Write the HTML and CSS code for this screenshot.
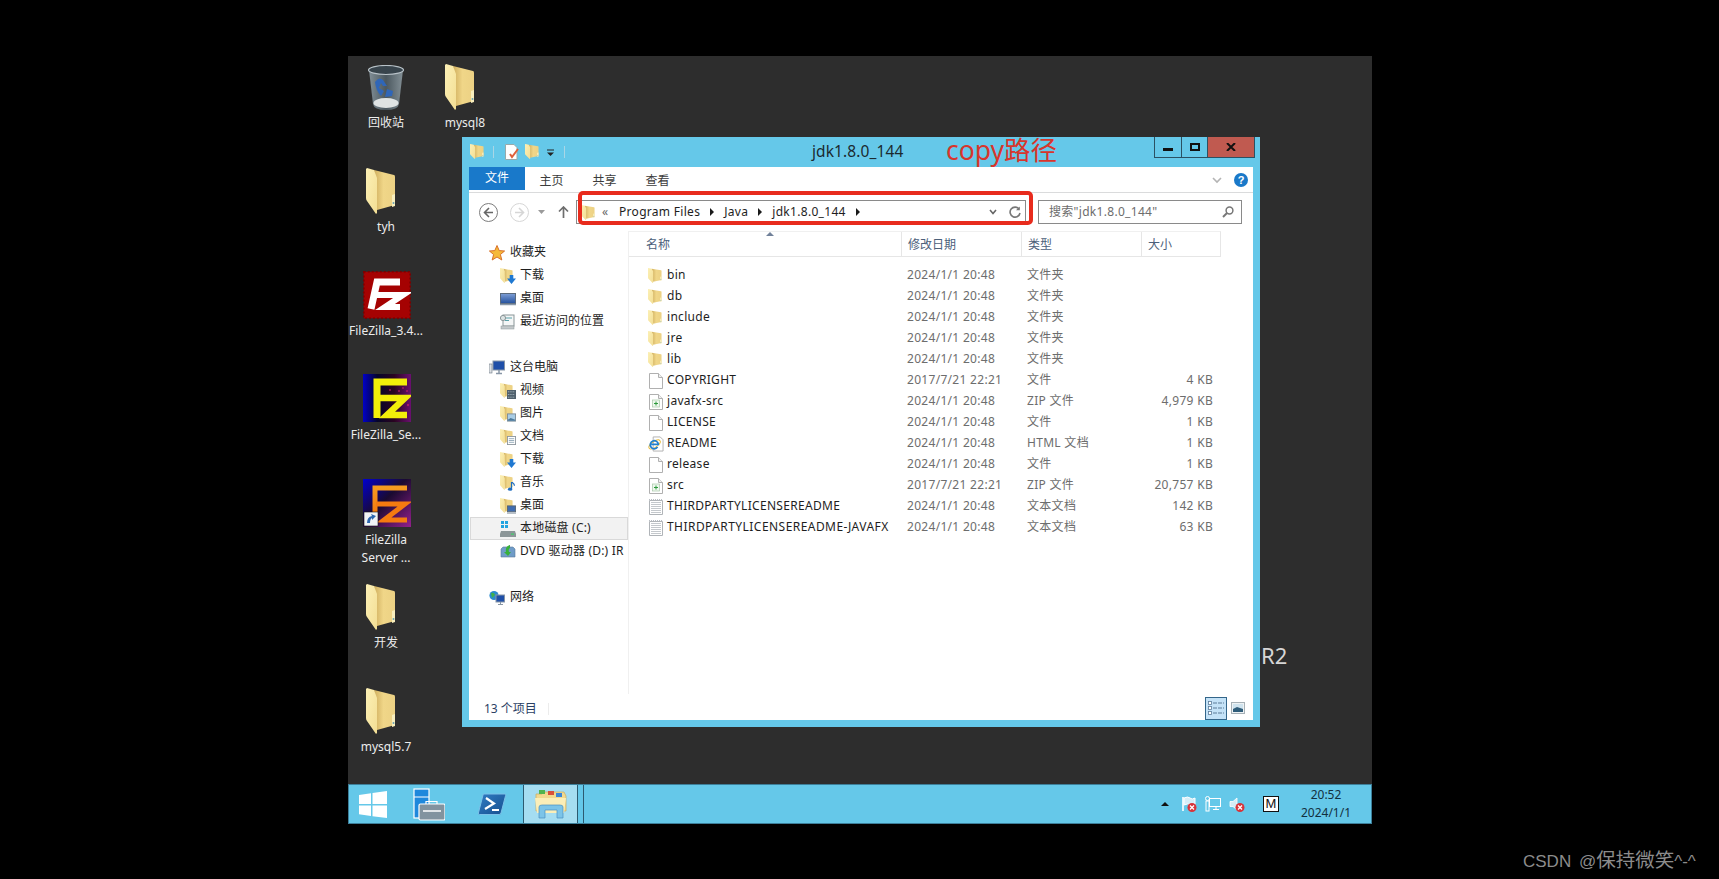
FILE: index.html
```html
<!DOCTYPE html>
<html lang="zh">
<head>
<meta charset="utf-8">
<title>jdk1.8.0_144</title>
<link rel="stylesheet" href="styles.css">
</head>
<body>
<svg class="defs" width="0" height="0">
  <defs>
    <linearGradient id="gLeaf" x1="0" y1="0" x2="1" y2="1"><stop offset="0" stop-color="#fcf0b6"/><stop offset="1" stop-color="#f3de94"/></linearGradient>
    <linearGradient id="gBack" x1="0" y1="0" x2="1" y2="0"><stop offset="0" stop-color="#cfae5e"/><stop offset=".45" stop-color="#f0d688"/><stop offset="1" stop-color="#ecd184"/></linearGradient>
    <linearGradient id="gBin" x1="0" y1="0" x2="1" y2="0"><stop offset="0" stop-color="#8a99a2"/><stop offset=".5" stop-color="#4e5c64"/><stop offset="1" stop-color="#8d9ba2"/></linearGradient>
    <linearGradient id="gFz2" x1="0" y1="0" x2="1" y2="0"><stop offset="0" stop-color="#0000c8"/><stop offset=".3" stop-color="#05052a"/><stop offset=".65" stop-color="#2a0420"/><stop offset="1" stop-color="#6a1070"/></linearGradient>
    <linearGradient id="gFz3" x1="0" y1="0" x2="1" y2="1"><stop offset="0" stop-color="#0000d0"/><stop offset=".45" stop-color="#1a0a30"/><stop offset="1" stop-color="#93208c"/></linearGradient>
    <linearGradient id="gOr" x1="0" y1="0" x2="0" y2="1"><stop offset="0" stop-color="#f59a20"/><stop offset="1" stop-color="#f26a08"/></linearGradient>
    <linearGradient id="gMon" x1="0" y1="0" x2="0" y2="1"><stop offset="0" stop-color="#7f9fd6"/><stop offset="1" stop-color="#23509c"/></linearGradient>
    <linearGradient id="gPs" x1="0" y1="0" x2="1" y2="1"><stop offset="0" stop-color="#2f7cc4"/><stop offset="1" stop-color="#174f8e"/></linearGradient>
    <symbol id="folder" viewBox="0 0 30 46" preserveAspectRatio="none">
      <path d="M8 2 L28 7 Q29 7 29 9 L29 37 L11 42 Z" fill="url(#gBack)"/>
      <path d="M1 0 L8 2 L11 10 L11 45 L10 46 L1 33 Q0 32 0 30 L0 1 Z" fill="url(#gLeaf)"/>
      <path d="M26 27 L29 26 L29 38 L26 39 Z" fill="#f8eebd"/>
      <circle cx="27.5" cy="35" r="1" fill="#6aa2b0"/>
    </symbol>
    <symbol id="file" viewBox="0 0 16 16">
      <path d="M1.5 .5 H10.5 L14.5 4.5 V15.5 H1.5 Z" fill="#fff" stroke="#b0b0b0"/>
      <path d="M10.5 .5 V4.5 H14.5" fill="#f0f0f0" stroke="#b0b0b0"/>
    </symbol>
    <symbol id="zip" viewBox="0 0 16 16">
      <use href="#file"/>
      <rect x="4.5" y="6" width="7" height="7" fill="#eef7ee" stroke="#a8c8a8" stroke-width=".7"/>
      <path d="M8 7.5 V11.5 M6 9.5 H10" stroke="#2d9a3c"/>
    </symbol>
    <symbol id="txt" viewBox="0 0 16 16">
      <path d="M1.5 1.5 H14.5 V15.5 H1.5 Z" fill="#fff" stroke="#b0b4b8"/>
      <path d="M1 .5 H15" stroke="#b9bec4" stroke-dasharray="1 1"/>
      <path d="M3 3.5 H13 M3 5.5 H13 M3 7.5 H13 M3 9.5 H13 M3 11.5 H13 M3 13.5 H13" stroke="#c4c8cc"/>
    </symbol>
    <symbol id="ie" viewBox="0 0 17 16">
      <path d="M5.5 .5 H13 L16 3.5 V15.5 H5.5 Z" fill="#fff" stroke="#b0b0b0"/>
      <ellipse cx="7" cy="8.5" rx="7" ry="3" fill="none" stroke="#e8b830" transform="rotate(-35 7 8.5)"/>
      <path d="M3.5 8.5 H11 A4.3 4.3 0 1 0 10.2 11.3" fill="none" stroke="#1e7fd0" stroke-width="1.8"/>
    </symbol>
  </defs>
</svg>

<main class="desktop">
  <div class="icon at-bin">
    <svg class="ico-bin" viewBox="0 0 36 46">
      <path d="M1 5 L5 39 Q6 45 18 45 Q30 45 31 39 L35 5 Z" fill="url(#gBin)" opacity=".9"/>
      <ellipse cx="18" cy="5" rx="17.5" ry="4.5" fill="#38444c" stroke="#b8c2c8" stroke-width="1.2"/>
      <ellipse cx="18" cy="38" rx="12.5" ry="5" fill="#dfe3e3"/>
      <path d="M7 17 Q11 11 15 15 L19 21 L15 21 L13 18 L11 23 L16 26 L13 31 Q8 26 7 17 Z M19 24 L25 26 L24 31 L17 32 Z" fill="#2f66b8"/>
    </svg>
    <span class="lbl">回收站</span>
  </div>
  <div class="icon at-mysql8"><svg class="ico-folder"><use href="#folder"/></svg><span class="lbl">mysql8</span></div>
  <div class="icon at-tyh"><svg class="ico-folder"><use href="#folder"/></svg><span class="lbl">tyh</span></div>
  <div class="icon at-fz1">
    <svg class="ico-fz" viewBox="0 0 48 48">
      <rect x=".8" y=".8" width="46.4" height="46.4" fill="#a50202" stroke="#7a0000" stroke-width="1.6" stroke-dasharray="2 2"/>
      <polyline points="37,11 14,11 8,38" fill="none" stroke="#fff" stroke-width="7"/>
      <polyline points="14,24 40,24 22,36 37,36" fill="none" stroke="#fff" stroke-width="6"/>
    </svg>
    <span class="lbl">FileZilla_3.4...</span>
  </div>
  <div class="icon at-fz2">
    <svg class="ico-fz" viewBox="0 0 48 48">
      <rect width="48" height="48" fill="url(#gFz2)"/>
      <g fill="#c8206a" opacity=".7"><circle cx="40" cy="14" r="1"/><circle cx="44" cy="17" r="1"/><circle cx="30" cy="32" r="1"/><circle cx="45" cy="31" r="1.2"/><circle cx="27" cy="16" r="1"/><circle cx="36" cy="17" r="1"/></g>
      <polyline points="44,8 14,8 14,44" fill="none" stroke="#f2ee0a" stroke-width="7"/>
      <polyline points="16,24 42,24 24,41 44,41" fill="none" stroke="#f2ee0a" stroke-width="6.5"/>
    </svg>
    <span class="lbl">FileZilla_Se...</span>
  </div>
  <div class="icon at-fz3">
    <svg class="ico-fz" viewBox="0 0 48 48">
      <rect width="48" height="48" fill="url(#gFz3)"/>
      <polyline points="44,9 12,9 12,46" fill="none" stroke="url(#gOr)" stroke-width="5"/>
      <polyline points="13,25 42,25 21,41 44,41" fill="none" stroke="#f57a10" stroke-width="5"/>
      <rect x="1" y="33" width="14" height="14" fill="#f1f3f5" stroke="#111" stroke-width=".6"/>
      <path d="M4 44 Q4 38 9 37 L8 35 L13 37 L9 41 L9 39 Q7 40 7 44 Z" fill="#2d66ae"/>
    </svg>
    <span class="lbl">FileZilla<br>Server ...</span>
  </div>
  <div class="icon at-dev"><svg class="ico-folder"><use href="#folder"/></svg><span class="lbl">开发</span></div>
  <div class="icon at-mysql57"><svg class="ico-folder"><use href="#folder"/></svg><span class="lbl">mysql5.7</span></div>

  <span class="edition">R2</span>

  <section class="window">
    <header class="titlebar">
      <svg class="qa-folder"><use href="#folder"/></svg>
      <i class="qa-sep"></i>
      <svg class="qa-doc" viewBox="0 0 15 16">
        <path d="M1.5 .5 H10 L13 3.5 V15.5 H1.5 Z" fill="#fff" stroke="#9aa"/>
        <path d="M6 10 L8 13 L14 5" fill="none" stroke="#e0603a" stroke-width="2"/>
      </svg>
      <svg class="qa-folder2"><use href="#folder"/></svg>
      <svg class="qa-drop" viewBox="0 0 9 8"><path d="M1 1 H8" stroke="#222"/><path d="M1 3.5 H8 L4.5 7 Z" fill="#222"/></svg>
      <i class="qa-sep qa-sep2"></i>
      <span class="wintitle">jdk1.8.0_144</span>
      <div class="controls">
        <button class="ctl ctl-min"><i></i></button>
        <button class="ctl ctl-max"><i></i></button>
        <button class="ctl ctl-close"><svg viewBox="0 0 10 8" width="10" height="8"><path d="M1 0 L9 8 M9 0 L1 8" stroke="#111" stroke-width="2"/></svg></button>
      </div>
    </header>
    <span class="note">copy路径</span>

    <div class="client">
      <nav class="ribbon">
        <span class="tab tab-file">文件</span>
        <span class="tab">主页</span>
        <span class="tab">共享</span>
        <span class="tab">查看</span>
        <svg class="rb-chev" viewBox="0 0 10 7"><path d="M1 1 L5 5 L9 1" fill="none" stroke="#b4b4b4" stroke-width="1.6"/></svg>
        <span class="help">?</span>
      </nav>

      <div class="addr-row">
        <svg class="nav-btn" viewBox="0 0 19 19"><circle cx="9.5" cy="9.5" r="9" fill="#fff" stroke="#7d7d7d"/><path d="M10 5 L5.5 9.5 L10 14 M5.5 9.5 H14" fill="none" stroke="#666" stroke-width="1.6"/></svg>
        <svg class="nav-btn nav-fwd" viewBox="0 0 19 19"><circle cx="9.5" cy="9.5" r="9" fill="#fff" stroke="#d6d6d6"/><path d="M9 5 L13.5 9.5 L9 14 M13.5 9.5 H5" fill="none" stroke="#d6d6d6" stroke-width="1.6"/></svg>
        <svg class="nav-drop" viewBox="0 0 7 4"><path d="M0 0 H7 L3.5 4 Z" fill="#9a9a9a"/></svg>
        <svg class="nav-up" viewBox="0 0 11 12"><path d="M5.5 1 V12 M1 5.5 L5.5 1 L10 5.5" fill="none" stroke="#6e6e6e" stroke-width="1.7"/></svg>
        <div class="addr">
          <svg class="addr-folder"><use href="#folder"/></svg>
          <span class="crumb-back">«</span>
          <span class="crumb">Program Files</span><i class="tri"></i>
          <span class="crumb">Java</span><i class="tri"></i>
          <span class="crumb">jdk1.8.0_144</span><i class="tri"></i>
          <svg class="addr-chev" viewBox="0 0 8 6"><path d="M1 1 L4 4.5 L7 1" fill="none" stroke="#666" stroke-width="1.6"/></svg>
          <svg class="addr-ref" viewBox="0 0 12 12"><path d="M10 3 A5 5 0 1 0 11 7" fill="none" stroke="#777" stroke-width="1.6"/><path d="M10.8 .5 V4.2 H7" fill="#777"/></svg>
        </div>
        <div class="search">
          <span>搜索"jdk1.8.0_144"</span>
          <svg viewBox="0 0 12 12" width="12" height="12"><circle cx="7.5" cy="4.5" r="3.4" fill="none" stroke="#777" stroke-width="1.5"/><path d="M5 7 L1 11" stroke="#777" stroke-width="2"/></svg>
        </div>
      </div>

      <div class="panes">
        <aside class="tree">
          <div class="t0 t-first"><svg class="ti" viewBox="0 0 16 16"><path d="M8 .5 L10.2 5.6 L15.6 6 L11.4 9.5 L12.8 15 L8 12 L3.2 15 L4.6 9.5 L.4 6 L5.8 5.6 Z" fill="#f5b93a" stroke="#d8702a"/></svg>收藏夹</div>
          <div class="t1"><span class="fi"><svg class="fi-f"><use href="#folder"/></svg><svg class="fi-o" viewBox="0 0 10 10"><path d="M3 0 H7 V4 H10 L5 10 L0 4 H3 Z" fill="#1f78d1"/></svg></span>下载</div>
          <div class="t1"><svg class="ti" viewBox="0 0 16 16"><rect x=".5" y="2.5" width="15" height="10" fill="url(#gMon)" stroke="#5b6a7c"/><path d="M0 13.5 H16" stroke="#8a98a8" stroke-width="1.5"/></svg>桌面</div>
          <div class="t1"><svg class="ti" viewBox="0 0 16 16"><rect x="3" y="1" width="11" height="11" fill="#f4f6f6" stroke="#8a9698"/><path d="M5 4 H12 M5 6.5 H9" stroke="#59a0a8"/><circle cx="3" cy="4" r="2.6" fill="#dde3e3" stroke="#8a9698"/><rect x="1" y="12" width="13" height="3" fill="#c4c9cb" stroke="#8a9698" stroke-width=".5"/></svg>最近访问的位置</div>

          <div class="t0 t-group"><svg class="ti" viewBox="0 0 16 16"><rect x="4" y="1" width="11.5" height="9" fill="#1f4fa8" stroke="#8896a6"/><rect x="0" y="4" width="3" height="9" fill="#dde0e3" stroke="#6a7682" stroke-width=".6"/><path d="M7 13.5 H13 M10 10 V13" stroke="#8896a6" stroke-width="1.5"/></svg>这台电脑</div>
          <div class="t1"><span class="fi"><svg class="fi-f"><use href="#folder"/></svg><svg class="fi-o" viewBox="0 0 10 10"><rect width="10" height="10" fill="#50606c"/><path d="M1 2 H9 M1 5 H9 M1 8 H9" stroke="#b8c8d0" stroke-dasharray="1 1"/></svg></span>视频</div>
          <div class="t1"><span class="fi"><svg class="fi-f"><use href="#folder"/></svg><svg class="fi-o" viewBox="0 0 10 9"><rect x=".5" y=".5" width="9" height="8" fill="#a9cde6" stroke="#7b8a96"/><path d="M1 7 L4 5 L9 7 V8 H1 Z" fill="#4c7a9c"/></svg></span>图片</div>
          <div class="t1"><span class="fi"><svg class="fi-f"><use href="#folder"/></svg><svg class="fi-o" viewBox="0 0 10 10"><rect x=".5" y=".5" width="9" height="9" fill="#fff" stroke="#8c969e"/><path d="M2 3 H8 M2 5 H8 M2 7 H8" stroke="#8fa6b6"/></svg></span>文档</div>
          <div class="t1"><span class="fi"><svg class="fi-f"><use href="#folder"/></svg><svg class="fi-o" viewBox="0 0 10 10"><path d="M3 0 H7 V4 H10 L5 10 L0 4 H3 Z" fill="#1f78d1"/></svg></span>下载</div>
          <div class="t1"><span class="fi"><svg class="fi-f"><use href="#folder"/></svg><svg class="fi-o" viewBox="0 0 10 12"><path d="M5 0 V9 M5 0 Q9 2 9 5" fill="none" stroke="#1f6dbf" stroke-width="1.6"/><ellipse cx="3.2" cy="9.5" rx="3" ry="2.2" fill="#1f6dbf"/></svg></span>音乐</div>
          <div class="t1"><span class="fi"><svg class="fi-f"><use href="#folder"/></svg><svg class="fi-o" viewBox="0 0 10 9"><rect x=".5" y=".5" width="9" height="6.5" fill="#3f6cb0" stroke="#566472"/><path d="M0 8.5 H10" stroke="#7c8a98"/></svg></span>桌面</div>
          <div class="t1 t-sel"><svg class="ti" viewBox="0 0 16 16"><g fill="#22a3e0"><rect x="1" y="0" width="3" height="3"/><rect x="5" y="0" width="3" height="3"/><rect x="1" y="4" width="3" height="3"/><rect x="5" y="4" width="3" height="3"/></g><path d="M1 10 H15 L16 13 V16 H0 V13 Z" fill="#8c9698"/><rect x="11" y="12.5" width="3" height="1.2" fill="#3fd06a"/></svg>本地磁盘 (C:)</div>
          <div class="t1 t-clip"><svg class="ti" viewBox="0 0 16 16"><path d="M1 5 L3 3 H13 L15 5 V13 H1 Z" fill="#6f9cc8" stroke="#5a7a9a" stroke-width=".6"/><path d="M10 1 Q5 2 6 8 L4 8 L8 12 L11 8 L9 8 Q8 5 10 4 Z" fill="#38b03a"/></svg>DVD 驱动器 (D:) IR</div>

          <div class="t0 t-group t-net"><svg class="ti" viewBox="0 0 16 16"><circle cx="5" cy="5.5" r="4.6" fill="#2a8ad0"/><path d="M2 3 Q5 2 6 5 L3 8 Z" fill="#3fb04a"/><rect x="7" y="5" width="8.5" height="7" fill="#1f4fa8" stroke="#8896a6"/><path d="M9 14.5 H14 M11.5 12 V14" stroke="#8896a6"/></svg>网络</div>
        </aside>

        <div class="listing">
          <i class="sort-mark"></i>
          <div class="grid head">
            <span class="hc hc-name">名称</span>
            <span class="hc">修改日期</span>
            <span class="hc">类型</span>
            <span class="hc">大小</span>
          </div>
          <div class="rows">
            <div class="grid row"><span class="n"><svg class="ri-f"><use href="#folder"/></svg>bin</span><span>2024/1/1 20:48</span><span>文件夹</span><span class="s"></span></div>
            <div class="grid row"><span class="n"><svg class="ri-f"><use href="#folder"/></svg>db</span><span>2024/1/1 20:48</span><span>文件夹</span><span class="s"></span></div>
            <div class="grid row"><span class="n"><svg class="ri-f"><use href="#folder"/></svg>include</span><span>2024/1/1 20:48</span><span>文件夹</span><span class="s"></span></div>
            <div class="grid row"><span class="n"><svg class="ri-f"><use href="#folder"/></svg>jre</span><span>2024/1/1 20:48</span><span>文件夹</span><span class="s"></span></div>
            <div class="grid row"><span class="n"><svg class="ri-f"><use href="#folder"/></svg>lib</span><span>2024/1/1 20:48</span><span>文件夹</span><span class="s"></span></div>
            <div class="grid row"><span class="n"><svg class="ri"><use href="#file"/></svg>COPYRIGHT</span><span>2017/7/21 22:21</span><span>文件</span><span class="s">4 KB</span></div>
            <div class="grid row"><span class="n"><svg class="ri"><use href="#zip"/></svg>javafx-src</span><span>2024/1/1 20:48</span><span>ZIP 文件</span><span class="s">4,979 KB</span></div>
            <div class="grid row"><span class="n"><svg class="ri"><use href="#file"/></svg>LICENSE</span><span>2024/1/1 20:48</span><span>文件</span><span class="s">1 KB</span></div>
            <div class="grid row"><span class="n"><svg class="ri"><use href="#ie"/></svg>README</span><span>2024/1/1 20:48</span><span>HTML 文档</span><span class="s">1 KB</span></div>
            <div class="grid row"><span class="n"><svg class="ri"><use href="#file"/></svg>release</span><span>2024/1/1 20:48</span><span>文件</span><span class="s">1 KB</span></div>
            <div class="grid row"><span class="n"><svg class="ri"><use href="#zip"/></svg>src</span><span>2017/7/21 22:21</span><span>ZIP 文件</span><span class="s">20,757 KB</span></div>
            <div class="grid row"><span class="n"><svg class="ri"><use href="#txt"/></svg>THIRDPARTYLICENSEREADME</span><span>2024/1/1 20:48</span><span>文本文档</span><span class="s">142 KB</span></div>
            <div class="grid row"><span class="n n-long"><svg class="ri"><use href="#txt"/></svg>THIRDPARTYLICENSEREADME-JAVAFX</span><span>2024/1/1 20:48</span><span>文本文档</span><span class="s">63 KB</span></div>
          </div>
        </div>
      </div>

      <footer class="status">
        <span class="count">13 个项目</span>
        <i class="count-sep"></i>
        <span class="view view-on"><svg viewBox="0 0 16 14" width="16" height="14"><g fill="#fff" stroke="#5d7c99" stroke-width=".8"><rect x=".5" y=".5" width="3" height="3"/><rect x=".5" y="5.5" width="3" height="3"/><rect x=".5" y="10.5" width="3" height="3"/></g><path d="M5 2 H16 M5 7 H16 M5 12 H16" stroke="#5d7c99" stroke-dasharray="4 1"/></svg></span>
        <span class="view"><svg viewBox="0 0 14 12" width="14" height="12"><rect x=".5" y=".5" width="13" height="11" fill="#eef2f4" stroke="#a6b0b6"/><rect x="2" y="2" width="10" height="8" fill="#cfe3ee"/><path d="M2 7 L6 5 L12 7 V10 H2 Z" fill="#2f5d7a"/></svg></span>
      </footer>
    </div>
    <div class="path-mark"></div>
  </section>

  <footer class="taskbar">
    <svg class="tb-start" viewBox="0 0 28 27"><path d="M0 4 L12 2.3 V13 H0 Z M13.5 2 L28 0 V13 H13.5 Z M0 14.5 H12 V25 L0 23.3 Z M13.5 14.5 H28 V27 L13.5 25.2 Z" fill="#fff"/></svg>
    <svg class="tb-srv" viewBox="0 0 32 33"><rect x="1" y="1" width="15" height="29" fill="#1f88dc" stroke="#fff" stroke-width="1.2"/><path d="M1 9 H16" stroke="#fff"/><rect x="6" y="16" width="26" height="16" rx="1.5" fill="#82939f" stroke="#fff" stroke-width="1.2"/><path d="M13 16 V13.5 H24 V16" fill="none" stroke="#fff" stroke-width="1.2"/><path d="M10 23 H28" stroke="#fff" stroke-width="1.5"/></svg>
    <svg class="tb-ps" viewBox="0 0 28 22"><path d="M6 1 H27 Q28 1 27.6 2.5 L23 20 Q22.6 21.5 21 21.5 H1.5 Q0 21.5 .4 20 L5 2 Q5.2 1 6 1 Z" fill="url(#gPs)" stroke="#7cc0e8"/><path d="M8 5 L16 10.5 L7 16" fill="none" stroke="#fff" stroke-width="2.2"/><path d="M14 17 H21" stroke="#fff" stroke-width="2"/></svg>
    <div class="tb-active">
      <svg viewBox="0 0 32 30" width="32" height="30"><path d="M1 5 H7 L9 3 H29 L31 7 V22 H1 Z" fill="#f2d98e" stroke="#c8aa60" stroke-width=".7"/><rect x="4" y="1" width="6" height="4" fill="#4fb44f"/><rect x="13" y="2" width="6" height="4" fill="#d8503a"/><rect x="21" y="4" width="6" height="4" fill="#3a86d8"/><path d="M0 9 H31 L29 24 H2 Z" fill="#fbeeb8"/><path d="M4 29 V18 Q4 16 7 16 H25 Q28 16 28 18 V29 H22 V21 H10 V29 Z" fill="#7cc4e8" stroke="#4a90c0" stroke-width=".7"/></svg>
    </div>
    <i class="tb-sep"></i>
    <div class="tray">
      <i class="tray-arrow"></i>
      <svg class="tr" viewBox="0 0 16 16"><path d="M2 1 V15" stroke="#fff" stroke-width="1.6"/><path d="M3 2 Q7 0 9 2 T14 2 V9 Q11 11 9 9 T3 9 Z" fill="#d6eef8" stroke="#fff"/><circle cx="11" cy="11.5" r="4.5" fill="#d8343a"/><path d="M9 9.5 L13 13.5 M13 9.5 L9 13.5" stroke="#fff" stroke-width="1.3"/></svg>
      <svg class="tr" viewBox="0 0 16 16"><rect x="4.5" y="2.5" width="11" height="8" fill="none" stroke="#fff"/><path d="M8 13.5 H14 M11 11 V13" stroke="#fff"/><circle cx="2.5" cy="2.5" r="2" fill="none" stroke="#fff"/><rect x="1" y="5" width="3" height="10" fill="none" stroke="#fff"/></svg>
      <svg class="tr" viewBox="0 0 16 16"><path d="M1 5.5 H4 L8 2 V14 L4 10.5 H1 Z" fill="#d4ecf6" stroke="#fff" stroke-width=".8"/><circle cx="11" cy="11.5" r="4.5" fill="#d8343a"/><path d="M9 9.5 L13 13.5 M13 9.5 L9 13.5" stroke="#fff" stroke-width="1.3"/></svg>
      <span class="ime">M</span>
      <div class="clock"><span>20:52</span><span>2024/1/1</span></div>
    </div>
  </footer>
</main>
<span class="watermark">CSDN @<span class="wm-cjk">保持微笑</span>^-^</span>
</body>
</html>
```
FILE: styles.css
```css
* { box-sizing: border-box; }
html, body { margin: 0; height: 100%; }
body {
  background: #000;
  overflow: hidden;
  padding: 56px 0 0 348px;
  font: 12px/1.2 "Noto Sans", "Noto Sans CJK SC", sans-serif;
  color: #1e1e1e;
}
.defs { position: absolute; }
i { display: block; font-style: normal; }
svg { display: block; flex: none; }

.desktop {
  position: relative;
  width: 1024px;
  height: 768px;
  background: #2d2d2d;
  display: flex;
  flex-direction: column;
  justify-content: flex-end;
}

/* desktop icons: free canvas */
.icon {
  position: absolute;
  width: 80px;
  display: flex;
  flex-direction: column;
  align-items: center;
}
.lbl { color: #ececec; text-align: center; line-height: 18px; white-space: nowrap; }
.ico-folder { width: 30px; height: 46px; margin: 0 10px 4px 0; }
.ico-bin { width: 36px; height: 46px; margin-bottom: 3px; }
.ico-fz { width: 48px; height: 48px; margin: 0 0 4px 2px; }
.at-bin { left: -2px; top: 9px; }
.at-mysql8 { left: 77px; top: 8px; }
.at-tyh { left: -2px; top: 112px; }
.at-fz1 { left: -2px; top: 215px; }
.at-fz1 .ico-fz { margin-bottom: 3px; }
.at-fz2 { left: -2px; top: 318px; }
.at-fz3 { left: -2px; top: 423px; }
.at-dev { left: -2px; top: 528px; }
.at-mysql57 { left: -2px; top: 632px; }

.edition { position: absolute; left: 913px; top: 586px; font-size: 22px; color: #d6d6d6; }

/* explorer window */
.window {
  position: absolute;
  left: 114px;
  top: 81px;
  width: 798px;
  height: 590px;
  background: #65c8e9;
  padding: 0 7px 7px;
  display: flex;
  flex-direction: column;
}
.titlebar { height: 30px; display: flex; align-items: flex-start; flex: none; position: relative; }
.qa-folder { width: 14px; height: 15px; margin: 7px 0 0 1px; }
.qa-sep { width: 1px; height: 12px; background: #a9d6e6; margin: 9px 0 0 9px; }
.qa-doc { width: 15px; height: 16px; margin: 7px 0 0 10px; }
.qa-folder2 { width: 14px; height: 15px; margin: 7px 0 0 6px; }
.qa-drop { width: 9px; height: 8px; margin: 12px 0 0 7px; }
.qa-sep2 { margin-left: 9px; }
.wintitle { font-size: 15.5px; letter-spacing: .1px; margin: 4px 0 0 247px; color: #1b2a30; line-height: 20px; }
.controls { margin-left: auto; margin-right: -2px; display: flex; height: 21px; border: 1px solid #2b5163; border-top: 0; }
.ctl { border: 0; padding: 0; background: none; height: 20px; display: flex; align-items: center; justify-content: center; }
.ctl i { background: none; }
.ctl-min { width: 27px; border-right: 1px solid #2b5163; }
.ctl-min i { width: 10px; height: 3px; background: #111; margin-top: 5px; }
.ctl-max { width: 26px; border-right: 1px solid #2b5163; }
.ctl-max i { width: 10px; height: 8px; border: 2px solid #111; }
.ctl-close { width: 46px; background: #c05a50; }
.note {
  position: absolute;
  left: 484px;
  top: -2px;
  font-size: 26.5px;
  line-height: 30px;
  color: #d8352c;
}

.client { flex: 1; background: #fff; display: flex; flex-direction: column; min-height: 0; }
.ribbon {
  height: 26px;
  flex: none;
  display: flex;
  align-items: flex-start;
  border-bottom: 1px solid #dadbdc;
  padding-right: 4px;
}
.tab { width: 53px; line-height: 27px; text-align: center; color: #3c3c3c; }
.tab-file { width: 56px; height: 23px; line-height: 22px; background: #1979ca; color: #fff; }
.rb-chev { width: 10px; height: 7px; margin: 10px 0 0 auto; }
.help {
  width: 14px; height: 14px; margin: 6px 1px 0 12px; border-radius: 50%;
  background: #1a79c9; color: #fff; font: bold 11px/14px "Liberation Sans", sans-serif; text-align: center;
}

.addr-row { height: 38px; flex: none; display: flex; align-items: center; padding: 0 10px; }
.nav-btn { width: 19px; height: 19px; }
.nav-fwd { margin-left: 12px; }
.nav-drop { width: 7px; height: 4px; margin-left: 9px; }
.nav-up { width: 11px; height: 12px; margin-left: 13px; }
.addr {
  width: 450px; height: 24px; margin-left: 7px;
  border: 1px solid #8a8a8a;
  display: flex; align-items: center;
  padding-left: 4px;
}
.addr-folder { width: 14px; height: 15px; }
.crumb-back { margin-left: 7px; color: #666; width: 17px; }
.crumb { color: #1e1e1e; letter-spacing: .3px; }
.tri { width: 0; height: 0; border-left: 4px solid #1a1a1a; border-top: 4px solid transparent; border-bottom: 4px solid transparent; margin: 0 10px; }
.addr-chev { width: 8px; height: 6px; margin-left: auto; }
.addr-ref { width: 12px; height: 12px; margin: 0 4px 0 12px; }
.search {
  width: 204px; height: 24px; margin-left: 12px;
  border: 1px solid #8a8a8a;
  display: flex; align-items: center; justify-content: space-between;
  padding: 0 7px 0 10px; color: #6d6d6d; letter-spacing: .3px;
}

.panes { flex: 1; display: flex; min-height: 0; }
.tree { width: 160px; flex: none; border-right: 1px solid #f0f0f0; margin-bottom: 2px; padding-top: 10px; }
.t0, .t1 { height: 23px; display: flex; align-items: center; gap: 5px; white-space: nowrap; overflow: hidden; color: #1e1e1e; }
.t0 { padding-left: 20px; }
.t1 { padding-left: 31px; gap: 4px; }
.t1.t-sel { background: #f2f2f2; outline: 1px solid #d9d9d9; outline-offset: -1px; margin-left: 1px; padding-left: 30px; letter-spacing: .2px; }
.t-clip { width: 159px; letter-spacing: .2px; }
.t-group { margin-top: 23px; }
.t-net { margin-top: 23px; }
.ti { width: 16px; height: 16px; }
.fi { width: 16px; height: 16px; position: relative; flex: none; }
.fi-f { width: 13px; height: 15px; }
.fi-o { position: absolute; right: 0; bottom: 0; width: 9px; height: 9px; }

.listing { flex: 1; position: relative; min-width: 0; }
.sort-mark {
  position: absolute; left: 137px; top: 1px;
  border-left: 4.5px solid transparent; border-right: 4.5px solid transparent; border-bottom: 4px solid #71819a;
}
.grid { display: grid; grid-template-columns: 272px 120px 120px 80px; }
.head { height: 26px; width: 592px; border-top: 1px solid #f0f0f0; border-bottom: 1px solid #e6e6e6; border-right: 1px solid #e6e6e6; }
.hc { line-height: 25px; padding-left: 6px; color: #4c607a; border-left: 1px solid #e6e6e6; }
.hc-name { padding-left: 17px; border-left: 0; }
.rows { padding-top: 8px; width: 592px; }
.row { height: 21px; align-items: center; color: #6d6d6d; letter-spacing: .3px; }
.row > span { padding-left: 6px; white-space: nowrap; }
.row > .n { color: #1e1e1e; display: flex; align-items: center; padding-left: 19px; }
.row > .n-long { letter-spacing: .45px; }
.row > .s { text-align: right; padding: 0 8px 0 0; }
.ri { width: 16px; height: 16px; margin-right: 3px; }
.ri-f { width: 14px; height: 15px; margin-right: 5px; }

.status { height: 24px; flex: none; display: flex; align-items: center; position: relative; padding: 2px 8px 0 0; }
.count { margin-left: 15px; color: #2b4164; }
.count-sep { width: 1px; height: 12px; background: #ececec; margin-left: 11px; }
.view { width: 15px; height: 23px; display: flex; align-items: center; justify-content: center; margin-top: -2px; }
.view-on { width: 22px; margin-left: auto; background: #c4e2f7; border: 1px solid #34668a; margin-right: 3px; }

.path-mark {
  position: absolute; left: 116px; top: 54px; width: 455px; height: 34px;
  border: 4px solid #e82b1d; border-radius: 5px;
}

/* taskbar */
.taskbar {
  height: 40px; flex: none;
  background: #65c8e9;
  border: 1px solid #3d7f9a;
  display: flex; align-items: center;
  position: relative;
}
.tb-start { width: 28px; height: 27px; margin-left: 10px; }
.tb-srv { width: 32px; height: 33px; margin-left: 26px; }
.tb-ps { width: 28px; height: 22px; margin-left: 33px; }
.tb-active {
  width: 55px; height: 38px; margin-left: 17px;
  background: #a5ddf1;
  border-left: 1px solid #2c5a70; border-right: 1px solid #2c5a70;
  display: flex; align-items: center; justify-content: center;
}
.tb-sep { width: 1px; height: 38px; background: #2c5a70; margin-left: 5px; }
.tray { margin-left: auto; display: flex; align-items: center; }
.tray-arrow { width: 0; height: 0; border-left: 4px solid transparent; border-right: 4px solid transparent; border-bottom: 4px solid #111; margin-right: 12px; }
.tr { width: 16px; height: 16px; margin-right: 8px; }
.ime { width: 16px; height: 16px; margin-left: 10px; background: #fff; border: 1px solid #111; font: 13px/14px "Liberation Sans", sans-serif; color: #111; text-align: center; }
.clock { width: 72px; margin: 0 9px 0 11px; display: flex; flex-direction: column; align-items: center; line-height: 18px; color: #12303f; }

.watermark { position: absolute; left: 1523px; top: 849px; font: 17px/22px "Liberation Sans", "Noto Sans CJK SC", sans-serif; color: #8c8c8c; word-spacing: 3px; white-space: nowrap; }
.wm-cjk { font-size: 19.5px; }
```
